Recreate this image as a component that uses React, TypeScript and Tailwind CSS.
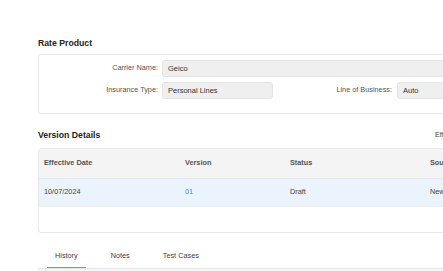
import React from "react";

export default function App() {
  const font = { fontFamily: '"Liberation Sans", Arial, sans-serif' };
  return (
    <div className="w-[443px] h-[271px] overflow-hidden bg-white" style={font}>
      <div className="w-[700px] pl-[38px] pt-[37px]">
        <div className="text-[8.7px] leading-[12px] font-bold text-[#222]">Rate Product</div>
        <div className="mt-[5px] border border-[#e6e6e6] rounded-[2px] pt-[5px] pb-[14px]">
          <div className="flex items-center">
            <div className="w-[119px] text-right text-[7.3px] text-[#555]">Carrier Name:</div>
            <div className="ml-[4px] w-[460px] h-[17px] rounded-[3px] bg-[#efefef] border border-[#e4e4e4] flex items-center px-[5px] text-[7.5px] text-[#333]">Geico</div>
          </div>
          <div className="flex items-center mt-[5px]">
            <div className="w-[119px] text-right text-[7.3px] text-[#555]">Insurance Type:</div>
            <div className="ml-[4px] w-[111px] h-[17px] rounded-[3px] bg-[#efefef] border border-[#e4e4e4] flex items-center px-[5px] text-[7.5px] text-[#333]">Personal Lines</div>
            <div className="w-[119px] text-right text-[7.3px] text-[#555]">Line of Business:</div>
            <div className="ml-[5px] w-[111px] h-[17px] rounded-[3px] bg-[#efefef] border border-[#e4e4e4] flex items-center px-[5px] text-[7.5px] text-[#333]">Auto</div>
          </div>
        </div>

        <div className="mt-[15px] grid grid-cols-[397px_auto] items-center">
          <div className="text-[8.7px] leading-[12px] font-bold text-[#222]">Version Details</div>
          <div className="text-[7.3px] text-[#444]">Effective Date</div>
        </div>

        <div className="mt-[7px] border border-[#e8e8e8] rounded-[3px] overflow-hidden">
          <div className="grid grid-cols-[140px_105px_140px_140px] h-[29px] items-center bg-[#f4f4f4] text-[7.3px] font-bold text-[#555]">
            <div className="pl-[5px]">Effective Date</div>
            <div className="pl-[6px]">Version</div>
            <div className="pl-[6px]">Status</div>
            <div className="pl-[6px]">Source</div>
          </div>
          <div className="grid grid-cols-[140px_105px_140px_140px] h-[28px] items-center bg-[#ebf3fc] border-t border-[#e3e8ee] text-[7.3px] text-[#444]">
            <div className="pl-[5px]">10/07/2024</div>
            <div className="pl-[6px] text-[#3a8ee6]">01</div>
            <div className="pl-[6px]">Draft</div>
            <div className="pl-[6px]">New</div>
          </div>
          <div className="h-[26px] border-t border-[#eeeeee]"></div>
        </div>

        <div className="mt-[18px] border-b border-[#e6e6e6] flex gap-[17px] pl-[9px]">
          <div className="px-[8px] pb-[6px] border-b-[1.5px] border-[#5a9ee6] text-[7.3px] text-[#444] leading-[10px]">History</div>
          <div className="px-[8px] pb-[6px] text-[7.3px] text-[#444] leading-[10px]">Notes</div>
          <div className="px-[8px] pb-[6px] text-[7.3px] text-[#444] leading-[10px]">Test Cases</div>
        </div>
        <div className="h-[20px] bg-[#f6f6f6]"></div>
      </div>
    </div>
  );
}
